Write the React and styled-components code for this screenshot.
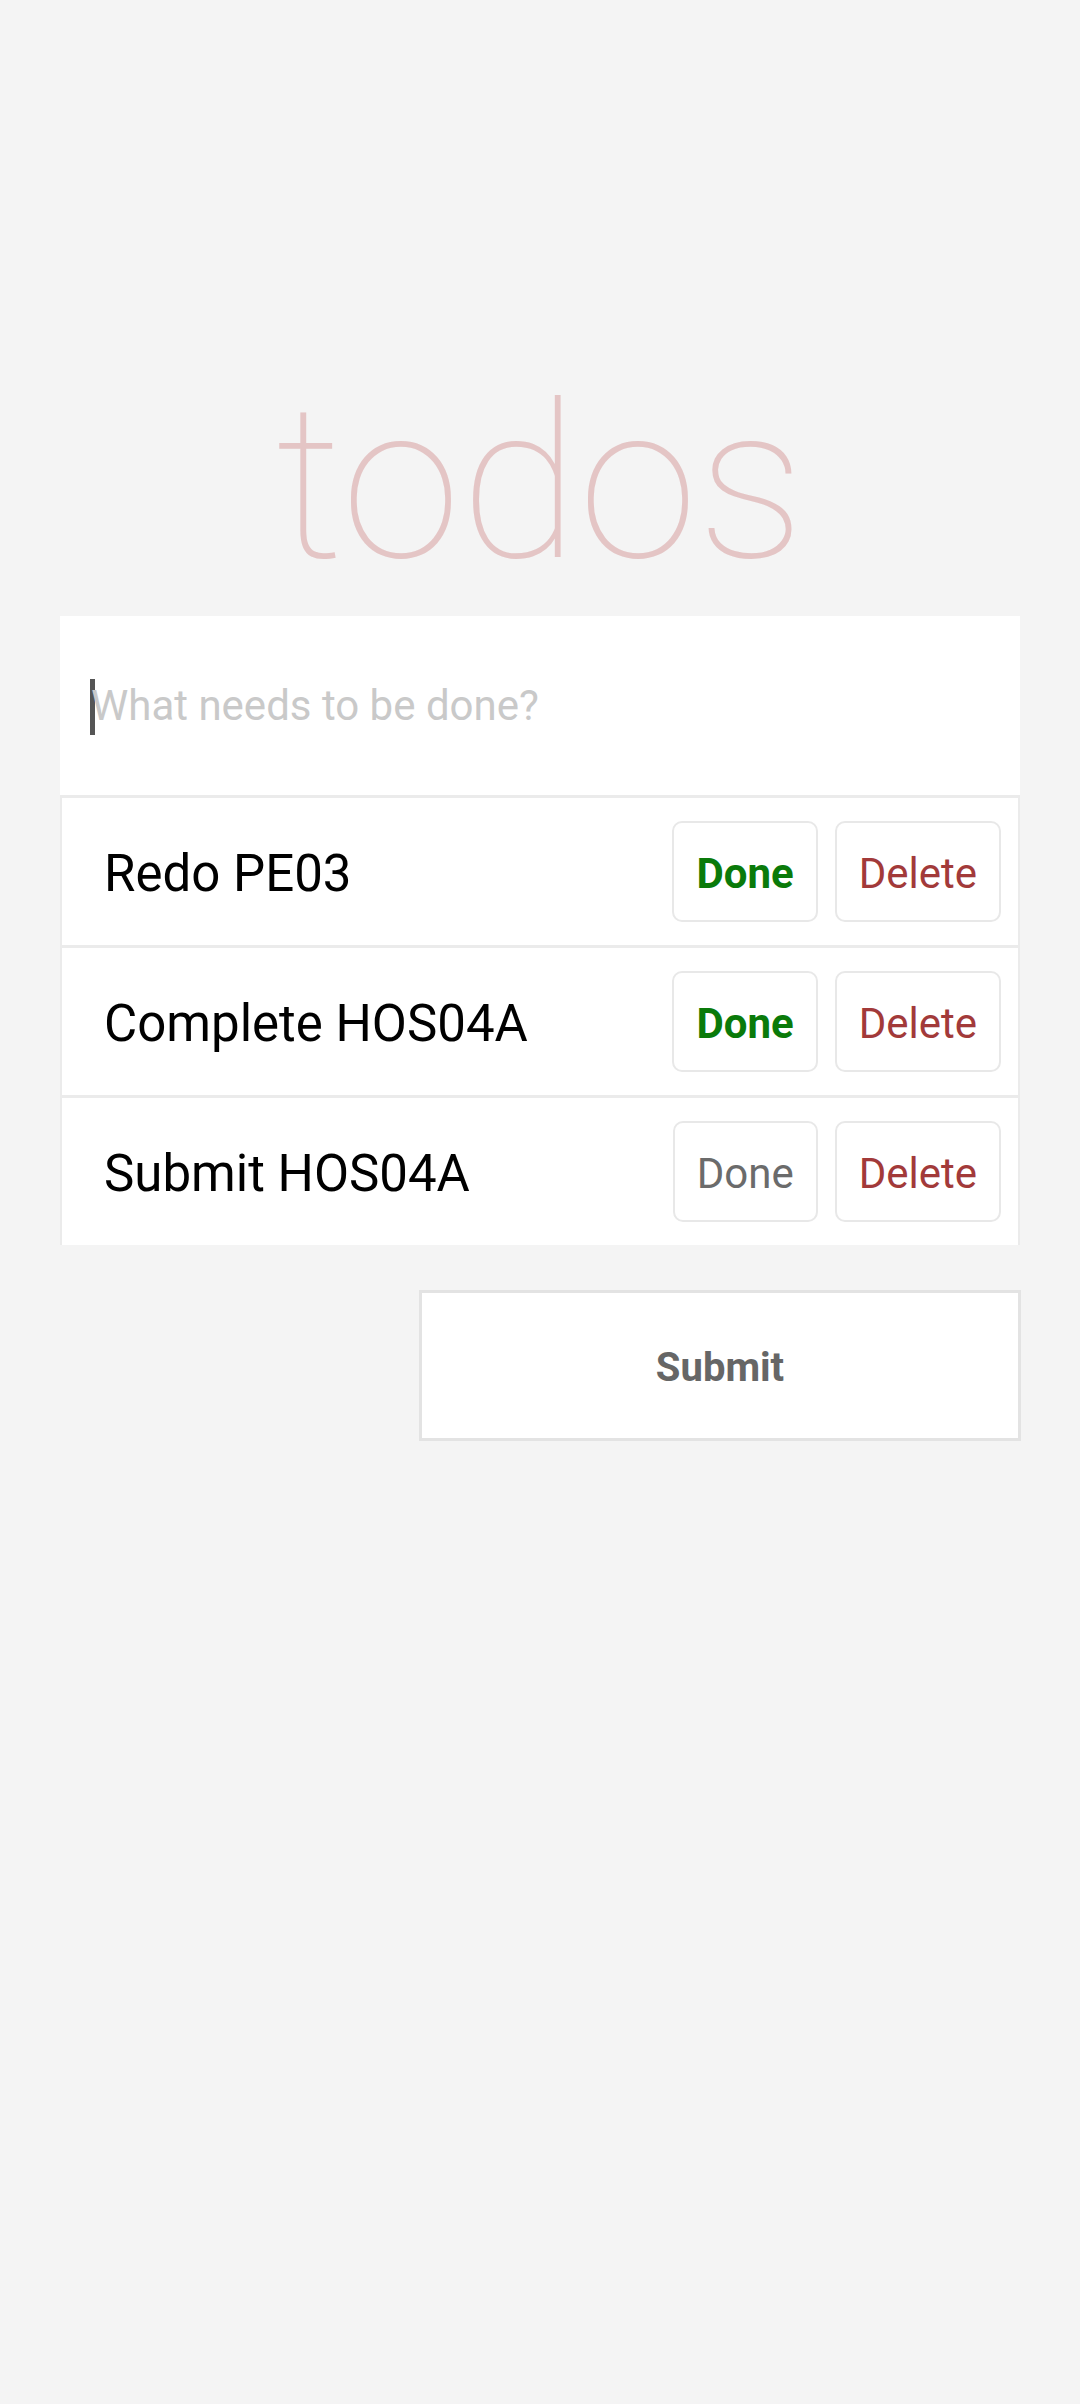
import React from 'react'
import styled, { createGlobalStyle } from 'styled-components'

const GlobalStyle = createGlobalStyle`
  html, body {
    margin: 0;
    background: #f4f4f4;
    font-family: Roboto, "Liberation Sans", sans-serif;
  }
  * { box-sizing: border-box; }
`

const todos = [
  { id: 1, title: 'Redo PE03', active: true },
  { id: 2, title: 'Complete HOS04A', active: true },
  { id: 3, title: 'Submit HOS04A', active: false },
]

function TodoRow({ item }) {
  return (
    <Row>
      <RowText>{item.title}</RowText>
      <Actions>
        <DoneButton $active={item.active}>Done</DoneButton>
        <DeleteButton>Delete</DeleteButton>
      </Actions>
    </Row>
  )
}

export default function App() {
  return (
    <>
      <GlobalStyle />
      <Page>
        <Title>todos</Title>
        <InputBox>
          <Caret />
          <NewTodo placeholder="What needs to be done?" />
        </InputBox>
        <List>
          {todos.map((item) => (
            <TodoRow key={item.id} item={item} />
          ))}
        </List>
        <SubmitButton>Submit</SubmitButton>
      </Page>
    </>
  )
}

const Page = styled.div`
  width: 960px;
  margin: 0 auto;
  padding-top: 376px;
  display: flex;
  flex-direction: column;
`

const Title = styled.h1`
  margin: 0 0 24px;
  font-size: 216px;
  line-height: 1;
  font-weight: 100;
  text-align: center;
  color: #e4c5c5;
`

const InputBox = styled.div`
  height: 179px;
  background: #fff;
  display: flex;
  align-items: center;
  padding-left: 30px;
`

const Caret = styled.span`
  width: 5px;
  height: 56px;
  background: #555;
  margin-right: -4px;
  margin-top: 2px;
`

const NewTodo = styled.input`
  flex: 1;
  border: none;
  outline: none;
  background: transparent;
  padding: 0;
  font-family: inherit;
  font-size: 42px;
  color: #333;

  &::placeholder {
    color: #c9c9c9;
  }
`

const List = styled.div`
  display: flex;
  flex-direction: column;
`

const Row = styled.div`
  height: 150px;
  background: #fff;
  border-top: 3px solid #ebebeb;
  border-left: 2px solid #ebebeb;
  border-right: 2px solid #ebebeb;
  display: flex;
  align-items: center;
  justify-content: space-between;
  padding: 4px 17px 0 42px;
`

const RowText = styled.span`
  font-size: 51px;
  color: #000;
`

const Actions = styled.div`
  display: flex;
  gap: 17px;
  margin-top: -4px;
`

const ActionButton = styled.button`
  height: 101px;
  padding: 4px 22px 0;
  background: #fff;
  border: 2px solid #e8e8e8;
  border-radius: 10px;
  font-family: inherit;
  font-size: 42px;
`

const DoneButton = styled(ActionButton)`
  color: ${(p) => (p.$active ? '#0a7a0a' : '#6b6b6b')};
  font-weight: ${(p) => (p.$active ? 700 : 400)};
`

const DeleteButton = styled(ActionButton)`
  color: #a23a3a;
`

const SubmitButton = styled.button`
  align-self: flex-end;
  width: 602px;
  height: 151px;
  margin-top: 45px;
  margin-right: -1px;
  padding-top: 4px;
  background: #fff;
  border: 3px solid #e3e3e3;
  font-family: inherit;
  font-size: 40px;
  font-weight: 700;
  color: #666;
`
